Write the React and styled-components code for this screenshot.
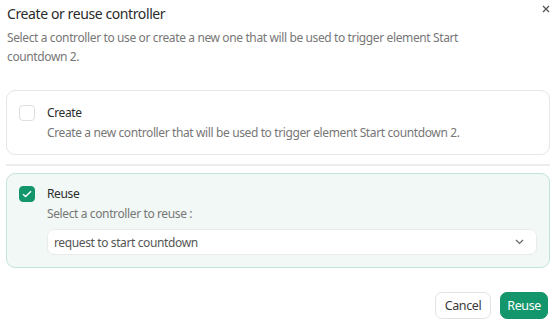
import React from 'react'
import styled, { createGlobalStyle } from 'styled-components'

const GlobalStyle = createGlobalStyle`
  body {
    margin: 0;
    background: #ffffff;
    font-family: "Noto Sans", "Open Sans", sans-serif;
    color: #2b2b2b;
    letter-spacing: -0.38px;
  }
`

const Dialog = styled.div`
  position: relative;
  width: 556px;
  height: 328px;
  box-sizing: border-box;
  padding: 4px 8px 0 6px;
  display: flex;
  flex-direction: column;
`

const Title = styled.h2`
  margin: 0 0 0 1px;
  font-size: 14px;
  font-weight: 400;
  line-height: 20px;
  letter-spacing: -0.4px;
  color: #2b2b2b;
`

const Subtitle = styled.p`
  margin: 4px 0 0 1px;
  font-size: 12px;
  line-height: 19px;
  color: #777777;
  max-width: 500px;
`

const Close = styled.button`
  position: absolute;
  top: 2px;
  right: 3px;
  width: 14px;
  height: 14px;
  padding: 0;
  border: 0;
  background: none;
  display: flex;
  align-items: center;
  justify-content: center;
`

const Card = styled.div`
  box-sizing: border-box;
  margin-right: -2px;
  border: 1px solid ${p => (p.$active ? '#c2e6d8' : '#e6e6e6')};
  background: ${p => (p.$active ? '#f1f8f5' : '#ffffff')};
  border-radius: 9px;
  padding: ${p => (p.$active ? '11px' : '13px')} 12px 12px 12px;
  display: flex;
  gap: 12px;
`

const Box = styled.span`
  flex: none;
  width: 16px;
  height: 16px;
  box-sizing: border-box;
  border-radius: 4px;
  border: 1px solid ${p => (p.$checked ? '#13966b' : '#dedede')};
  background: ${p => (p.$checked ? '#13966b' : '#ffffff')};
  display: flex;
  align-items: center;
  justify-content: center;
  margin-top: 1px;
`

const CardBody = styled.div`
  flex: 1;
  display: flex;
  flex-direction: column;
`

const CardTitle = styled.div`
  font-size: 12px;
  line-height: 18px;
  color: #2b2b2b;
`

const CardText = styled.div`
  font-size: 12px;
  line-height: 18px;
  margin-top: 2px;
  color: #777777;
`

const Divider = styled.hr`
  margin: 9px -2px 7px 0;
  border: 0;
  height: 2px;
  background: #ededed;
`

const Select = styled.div`
  margin-top: 6px;
  height: 26px;
  box-sizing: border-box;
  border: 1px solid #ebebeb;
  border-radius: 7px;
  background: #ffffff;
  display: flex;
  align-items: center;
  justify-content: space-between;
  padding: 0 12px 0 6px;
  font-size: 12px;
  color: #555555;
`

const Footer = styled.div`
  margin-top: auto;
  margin-bottom: 9px;
  display: flex;
  justify-content: flex-end;
  gap: 9px;
`

const Button = styled.button`
  height: 27px;
  box-sizing: border-box;
  padding: 0 ${p => (p.$primary ? '6px' : '9px')};
  border-radius: 7px;
  font-family: inherit;
  letter-spacing: inherit;
  font-size: 12.5px;
  border: 1px solid ${p => (p.$primary ? '#13966b' : '#e3e3e3')};
  background: ${p => (p.$primary ? '#13966b' : '#ffffff')};
  color: ${p => (p.$primary ? '#ffffff' : '#3a3a3a')};
`

function App() {
  return (
    <>
      <GlobalStyle />
      <Dialog>
        <Close aria-label="close">
          <svg width="8" height="8" viewBox="0 0 8 8">
            <path d="M1 1L7 7M7 1L1 7" stroke="#555" strokeWidth="1.3" />
          </svg>
        </Close>
        <Title>Create or reuse controller</Title>
        <Subtitle>
          Select a controller to use or create a new one that will be used to trigger element Start
          countdown 2.
        </Subtitle>

        <Card style={{ marginTop: 24 }}>
          <Box />
          <CardBody>
            <CardTitle>Create</CardTitle>
            <CardText>Create a new controller that will be used to trigger element Start countdown 2.</CardText>
          </CardBody>
        </Card>

        <Divider />

        <Card $active>
          <Box $checked>
            <svg width="10" height="8" viewBox="0 0 10 8">
              <path d="M1 4.2L3.6 6.6L9 1.2" fill="none" stroke="#fff" strokeWidth="1.4" />
            </svg>
          </Box>
          <CardBody>
            <CardTitle>Reuse</CardTitle>
            <CardText>Select a controller to reuse :</CardText>
            <Select>
              request to start countdown
              <svg width="9" height="6" viewBox="0 0 9 6">
                <path d="M1 1L4.5 4.5L8 1" fill="none" stroke="#666" strokeWidth="1.2" />
              </svg>
            </Select>
          </CardBody>
        </Card>

        <Footer>
          <Button>Cancel</Button>
          <Button $primary>Reuse</Button>
        </Footer>
      </Dialog>
    </>
  )
}

export default App
